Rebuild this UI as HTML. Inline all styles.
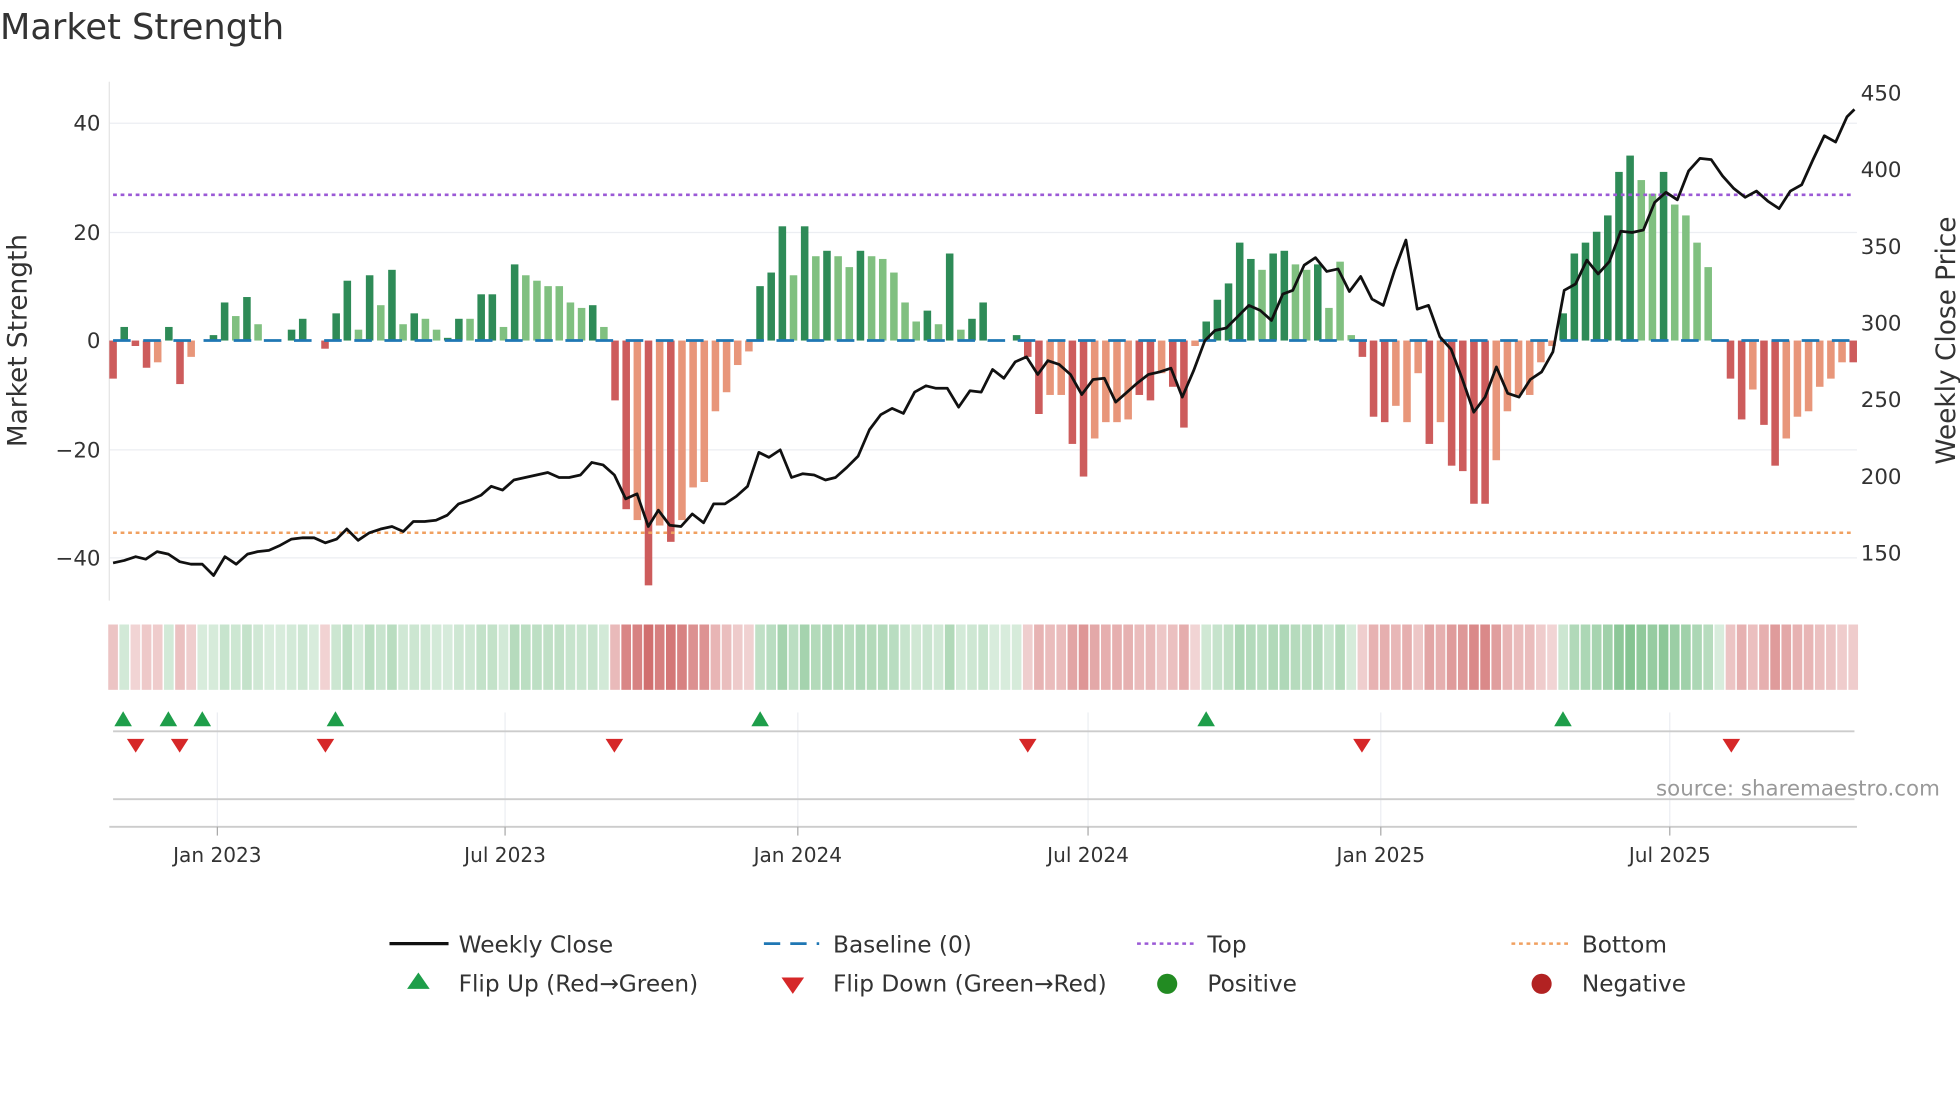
<!DOCTYPE html>
<html><head><meta charset="utf-8"><style>
html,body{margin:0;padding:0;background:#fff;width:1960px;height:1102px;overflow:hidden}
svg{display:block}
text{font-family:"DejaVu Sans","Liberation Sans",sans-serif;fill:#333}
</style></head><body>
<svg id="s" width="1960" height="1102" viewBox="0 0 1560 877" xmlns="http://www.w3.org/2000/svg">
<text x="0" y="31" font-size="28">Market Strength</text>
<g stroke="#eceef2" stroke-width="1">
<line x1="87" y1="98" x2="1478" y2="98"/><line x1="87" y1="185" x2="1478" y2="185"/>
<line x1="87" y1="358" x2="1478" y2="358"/><line x1="87" y1="444" x2="1478" y2="444"/>
</g>
<line x1="87" y1="65" x2="87" y2="478" stroke="#e4e4e4"/>
<g font-size="17" text-anchor="end">
<text x="80" y="104">40</text><text x="80" y="191">20</text><text x="80" y="277">0</text>
<text x="80" y="364">−20</text><text x="80" y="450">−40</text></g>
<g font-size="17">
<text x="1481" y="80">450</text><text x="1481" y="141">400</text><text x="1481" y="202">350</text>
<text x="1481" y="263">300</text><text x="1481" y="324">250</text><text x="1481" y="385">200</text><text x="1481" y="446">150</text></g>
<text transform="translate(21,271) rotate(-90)" font-size="21" text-anchor="middle">Market Strength</text>
<text transform="translate(1556,271) rotate(-90)" font-size="21" text-anchor="middle">Weekly Close Price</text>
<g id="bars"></g>
<line x1="90" y1="155" x2="1476" y2="155" stroke="#9b59d6" stroke-width="2" stroke-dasharray="3,3"/>
<line x1="90" y1="424" x2="1476" y2="424" stroke="#f0a060" stroke-width="2" stroke-dasharray="3,3"/>
<line x1="90" y1="271" x2="1476" y2="271" stroke="#1f77b4" stroke-width="2.2" stroke-dasharray="14,10"/>
<polyline id="price" fill="none" stroke="#111" stroke-width="2.2" stroke-linejoin="round"/>
<g id="heat"></g>
<g stroke="#eceef2"><line x1="173" y1="567" x2="173" y2="658"/><line x1="402" y1="567" x2="402" y2="658"/><line x1="635" y1="567" x2="635" y2="658"/><line x1="866" y1="567" x2="866" y2="658"/><line x1="1099" y1="567" x2="1099" y2="658"/><line x1="1329" y1="567" x2="1329" y2="658"/></g>
<line x1="90" y1="582" x2="1476" y2="582" stroke="#ccc" stroke-width="1.5"/>
<line x1="90" y1="636" x2="1476" y2="636" stroke="#ccc" stroke-width="1.5"/>
<line x1="87" y1="658" x2="1478" y2="658" stroke="#ccc" stroke-width="1.5"/>
<g stroke="#aaa"><line x1="173" y1="658" x2="173" y2="665"/><line x1="402" y1="658" x2="402" y2="665"/><line x1="635" y1="658" x2="635" y2="665"/><line x1="866" y1="658" x2="866" y2="665"/><line x1="1099" y1="658" x2="1099" y2="665"/><line x1="1329" y1="658" x2="1329" y2="665"/></g>
<g id="marks"></g>
<text x="1544" y="633" font-size="17" fill="#999" style="fill:#999" text-anchor="end">source: sharemaestro.com</text>
<g font-size="16" text-anchor="middle"><text x="173" y="686">Jan 2023</text><text x="402" y="686">Jul 2023</text><text x="635" y="686">Jan 2024</text><text x="866" y="686">Jul 2024</text><text x="1099" y="686">Jan 2025</text><text x="1329" y="686">Jul 2025</text></g>
<g font-size="18.5">
<line x1="310" y1="751" x2="357" y2="751" stroke="#111" stroke-width="2.5"/><text x="365" y="758">Weekly Close</text>
<line x1="608" y1="751" x2="652" y2="751" stroke="#1f77b4" stroke-width="2.2" stroke-dasharray="13,8"/><text x="663" y="758">Baseline (0)</text>
<line x1="905" y1="751" x2="950" y2="751" stroke="#9b59d6" stroke-width="2" stroke-dasharray="3,3"/><text x="961" y="758">Top</text>
<line x1="1203" y1="751" x2="1248" y2="751" stroke="#f0a060" stroke-width="2" stroke-dasharray="3,3"/><text x="1259" y="758">Bottom</text>
<polygon points="333,774 342,787 324,787" fill="#1e9e4a"/><text x="365" y="789">Flip Up (Red→Green)</text>
<polygon points="622,778 640,778 631,791" fill="#d62728"/><text x="663" y="789">Flip Down (Green→Red)</text>
<circle cx="929" cy="783" r="8" fill="#228b22"/><text x="961" y="789">Positive</text>
<circle cx="1227" cy="783" r="8" fill="#b22222"/><text x="1259" y="789">Negative</text>
</g>
</svg>
<script>
var NS="http://www.w3.org/2000/svg";
function el(t,a,p){var e=document.createElementNS(NS,t);for(var k in a)e.setAttribute(k,a[k]);p.appendChild(e);return e;}
var d="-7 2.5 -1 -5 -4O 2.5 -8 -3O 0 1 7 4.5L 8 3L 0 0 2 4 0 -1.5 5 11 2L 12 6.5L 13 3L 5 4L 2L 0.5 4 4L 8.5 8.5 2.5L 14 12L 11L 10L 10L 7L 6L 6.5 2.5L -11 -31 -33O -45 -34O -37 -33O -27O -26O -13O -9.5O -4.5O -2O 10 12.5 21 12L 21 15.5L 16.5 15.5L 13.5L 16.5 15.5L 15L 12.5L 7L 3.5L 5.5 3L 16 2L 4 7 0 0 1 -3 -13.5 -10O -10O -19 -25 -18O -15O -15O -14.5O -10 -11 -6O -8.5 -16 -1O 3.5 7.5 10.5 18 15 13L 16 16.5 14L 13L 14 6L 14.5L 1L -3 -14 -15 -12O -15O -6O -19 -15O -23 -24 -30 -30 -22O -13O -10O -10O -4O -1O 5 16 18 20 23 31 34 29.5L 27L 31 25L 23L 18L 13.5L 0 -7 -14.5 -9O -15.5 -23 -18O -14O -13O -8.5O -7O -4O -4".split(" ");
var bars=document.getElementById("bars"),heat=document.getElementById("heat");
var n=d.length, x0=90, dx=(1475-90)/(n-1);
for(var i=0;i<n;i++){var s=d[i],c=s.slice(-1),v=parseFloat(s),light=(c=="L"||c=="O");
 var x=x0+i*dx, y=271-v*4.33, col;
 if(v>=0)col=light?"#80c080":"#2e8b57"; else col=light?"#e8967a":"#cd5c5c";
 if(Math.abs(v)>0.3)el("rect",{x:x-3,y:Math.min(y,271),width:6,height:Math.abs(y-271),fill:col},bars);
 var a=0.2+0.5*Math.min(Math.abs(v)/40,1);
 var hc=v>=0?"rgba(60,160,80,"+a+")":"rgba(190,50,50,"+a+")";
 el("rect",{x:x-dx/2+0.6,y:497,width:dx-1.2,height:52,fill:hc},heat);}
var p="90,448 99,446 108,443 116,445 125,439 134,441 143,447 152,449 161,449 170,458 179,443 188,449 197,441 205,439 214,438 223,434 232,429 241,428 250,428 259,432 268,429 276,421 285,430 294,424 303,421 312,419 321,423 329,415 338,415 347,414 356,410 365,401 374,398 383,394 391,387 400,390 409,382 418,380 427,378 436,376 445,380 453,380 462,378 471,368 480,370 489,378 498,397 507,393 516,419 524,406 533,418 542,419 551,409 560,416 568,401 577,401 586,395 595,387 604,360 612,364 621,358 630,380 639,377 648,378 657,382 665,380 674,372 683,363 692,342 701,330 710,325 719,329 728,312 737,307 745,309 754,309 763,324 772,311 781,312 790,294 799,301 808,288 817,284 826,298 834,287 843,290 852,298 861,314 870,302 879,301 888,320 896,313 905,305 914,298 923,296 932,293 941,316 950,295 959,271 967,263 976,261 985,252 994,243 1003,247 1012,255 1021,234 1029,231 1038,211 1047,205 1056,216 1065,214 1074,232 1083,220 1092,238 1101,243 1110,215 1119,191 1128,246 1137,243 1146,268 1155,278 1164,302 1173,328 1182,316 1191,292 1200,313 1209,316 1218,302 1227,296 1236,280 1245,231 1254,226 1263,207 1272,218 1281,208 1290,184 1299,185 1308,183 1317,161 1326,153 1335,159 1344,136 1353,126 1362,127 1371,140 1380,150 1389,157 1398,152 1407,160 1416,166 1425,152 1434,147 1443,127 1452,108 1461,113 1470,93 1476,87";
document.getElementById("price").setAttribute("points",p);
var m=document.getElementById("marks");
[98,134,161,267,605,960,1244].forEach(function(x){el("polygon",{points:x+",566 "+(x+7)+",578 "+(x-7)+",578",fill:"#1e9e4a"},m);});
[108,143,259,489,818,1084,1378].forEach(function(x){el("polygon",{points:(x-7)+",588 "+(x+7)+",588 "+x+",599",fill:"#d62728"},m);});
</script>
</body></html>
